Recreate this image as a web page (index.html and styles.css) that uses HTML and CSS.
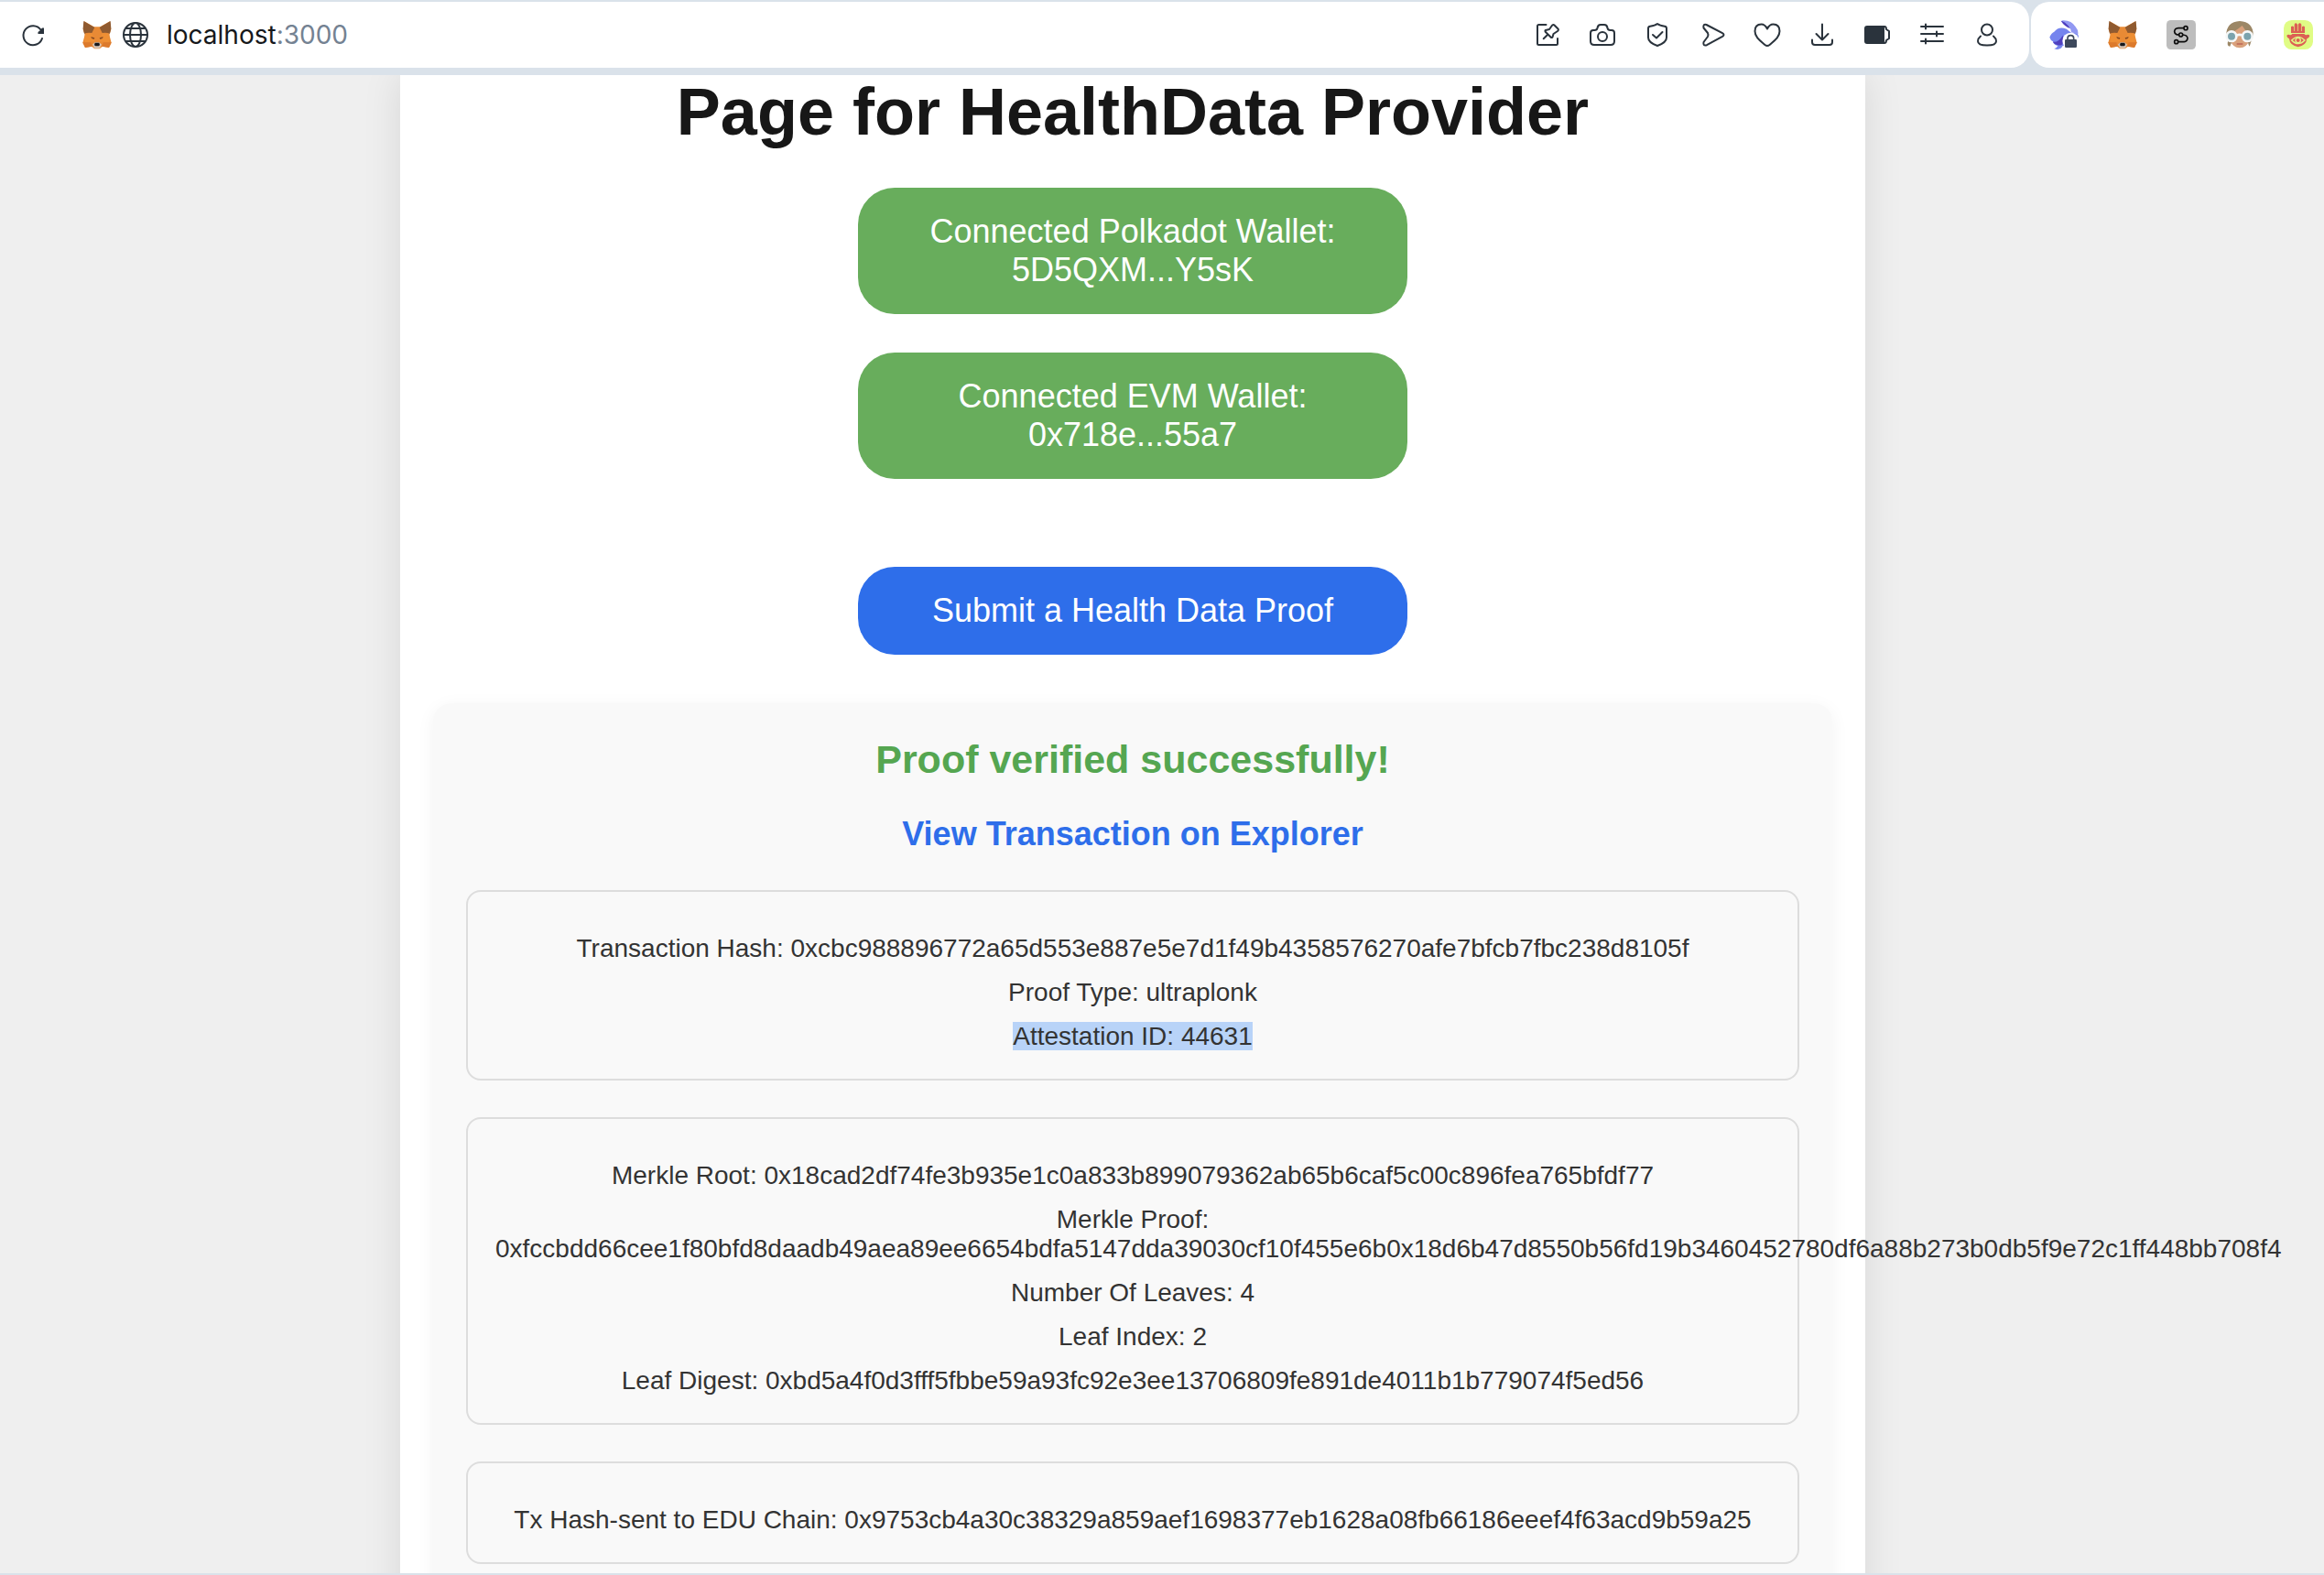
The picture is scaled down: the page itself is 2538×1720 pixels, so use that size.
FILE: index.html
```html
<!DOCTYPE html>
<html lang="en">
<head>
<meta charset="utf-8">
<title>HealthData Provider</title>
<link rel="stylesheet" href="styles.css">
</head>
<body>
<svg class="defs" aria-hidden="true">
  <symbol id="fox" viewBox="0 0 96 96">
    <path fill="#e88a35" d="M6 4L38 22H58L90 4L94 30L88 48L95 74L87 90L66 86L56 94H40L30 86L9 90L1 74L8 48L2 30Z"/>
    <path fill="#8f5a30" d="M4 3L40 24L31 42Q16 40 6 44L2 28ZM92 3L56 24L65 42Q80 40 90 44L94 28Z"/>
    <path fill="#ee8f34" d="M8 46L31 42L42 70L8 72ZM88 46L65 42L54 70L88 72Z"/>
    <path fill="#dc7a2c" d="M1 73H28L32 86L9 90ZM95 73H68L64 86L87 90Z"/>
    <path fill="#8a4d23" d="M28 54L40 58L38 63L30 60ZM68 54L56 58L58 63L66 60Z"/>
    <path fill="#d5c3b5" d="M33 80L41 73H55L63 80L56 92H40Z"/>
    <path fill="#17191c" d="M41 74H55L57 82L53 85H43L39 82Z"/>
  </symbol>
</svg>

<header class="chrome">
  <div class="bar bar-address">
    <button class="icon" aria-label="Reload">
      <svg viewBox="0 0 32 32"><path d="M24.500 10.500A10.500 10.500 0 1 0 26 20"/><path class="solid" d="M28 8.500V15H21.500V13L23.500 11.500L26 8.500Z"/></svg>
    </button>
    <div class="site">
      <svg class="icon" viewBox="0 0 96 96"><use href="#fox"/></svg>
      <svg class="icon globe" viewBox="0 0 32 32"><circle cx="16" cy="16" r="13"/><ellipse cx="16" cy="16" rx="6" ry="13"/><path d="M3 16H29M6 9H26M6 23H26"/></svg>
      <span class="url">localhost<span class="port">:3000</span></span>
    </div>
    <div class="tools">
      <button class="icon" aria-label="Edit"><svg viewBox="0 0 32 32"><path d="M14.500 5H6.500Q5 5 5 6.500V25.500Q5 27 6.500 27H25.500Q27 27 27 25.500V20"/><path d="M23.500 5.500L27.500 9.500Q28.500 10.500 27 12L22.500 15L21.500 18.500Q20.500 19.500 19.500 18.500L13.700 12.700Q13 11.500 14 11L18 10L21 5.700Q22.500 4.500 23.500 5.500ZM16.500 15.500L11.700 20.300"/></svg></button>
      <button class="icon" aria-label="Snapshot"><svg viewBox="0 0 32 32"><path d="M6 11H7.500Q10 11 10.500 8.500Q11 5 14 5H18Q21 5 21.500 8.500Q22 11 24.500 11H26Q29 11 29 14V23Q29 27 25 27H7Q3 27 3 23V14Q3 11 6 11Z"/><circle cx="16" cy="18" r="5"/></svg></button>
      <button class="icon" aria-label="Tracker protection"><svg viewBox="0 0 32 32"><path d="M16 4Q18.500 6 24 6.700Q26 7 26 9V19Q26 24.500 16 28Q6 24.500 6 19V9Q6 7 8 6.700Q13.500 6 16 4Z"/><path d="M11 16L15 19.500L21.500 13"/></svg></button>
      <button class="icon" aria-label="Send"><svg viewBox="0 0 32 32"><path d="M9.500 5L27 14.200Q30 16 27 17.800L10 27.200Q5.500 28.500 6.500 24L11 18Q12 16 11 14L6.500 8.500Q5.500 4 9.500 5Z"/></svg></button>
      <button class="icon" aria-label="Bookmark"><svg viewBox="0 0 32 32"><path d="M16 9.500Q13.500 4.500 9.500 4.500Q2.500 4.500 2.500 12C2.500 19 9 23 13.500 27Q16 29 18.500 27C23 23 29.500 19 29.500 12Q29.500 4.500 22.500 4.500Q18.500 4.500 16 9.500Z"/></svg></button>
      <button class="icon" aria-label="Downloads"><svg viewBox="0 0 32 32"><path d="M16 4.500V21M9.500 15L16 21.500L22.500 15M5 21.500V24Q5 27 8 27H24Q27 27 27 24V21.500"/></svg></button>
      <button class="icon" aria-label="Battery saver"><svg viewBox="0 0 32 32"><rect class="solid" x="2" y="6" width="22" height="20" rx="3"/><path d="M22 7H24Q26 7 26 10L29 12V20L26 22Q26 25 24 25H22"/></svg></button>
      <button class="icon" aria-label="Easy setup"><svg viewBox="0 0 32 32"><path d="M4 7H28M4 15H28M4 23H28M9 4.500V9.500M21 12.500V17.500M9 20.500V25.500"/></svg></button>
      <button class="icon" aria-label="Profile"><svg viewBox="0 0 32 32"><circle cx="16" cy="10.500" r="6"/><path d="M9 17.500Q6 20 6 23C6 26 9 27.500 16 27.500S26 26 26 23Q26 20 23 17.500"/></svg></button>
    </div>
  </div>
  <div class="bar bar-extensions">
    <button class="icon" aria-label="Wallet, locked"><svg class="art" viewBox="0 0 96 96">
      <path fill="#7584ee" d="M1 56Q6 42 16 38Q28 22 48 26Q58 28 62 34L76 44Q94 38 96 54Q94 72 62 78L44 84Q40 94 26 96L16 94Q24 92 28 84Q12 80 12 70Q4 66 1 56Z"/>
      <path fill="#4e3fc0" d="M38 2Q64 4 72 28Q50 22 38 2Z"/>
      <path fill="#9198f2" d="M40 1Q72 -2 86 22Q96 34 94 46L72 40Q70 18 40 1Z"/>
      <path fill="#5040be" d="M12 71Q30 74 44 50Q50 72 40 82Q20 84 12 71Z"/>
      <circle cx="70" cy="68" r="27" fill="#fff"/>
      <path fill="none" stroke="#3d495c" stroke-width="5" d="M60 66V60Q60 50 70 50T80 60V66"/>
      <rect x="51" y="63" width="39" height="27" rx="4" fill="#3d495c"/></svg></button>
    <button class="icon" aria-label="Fox wallet"><svg class="art" viewBox="0 0 96 96"><use href="#fox"/></svg></button>
    <button class="icon" aria-label="S wallet"><svg class="art" viewBox="0 0 96 96">
      <rect width="96" height="96" rx="14" fill="#bdbdbd"/>
      <g fill="none" stroke="#0c0c0c" stroke-width="5"><path d="M57 26H39Q27 27 26 37Q27 48 41 48M53 48Q68 49 69 59Q68 70 58 71H38"/><circle cx="63" cy="26" r="6"/><circle cx="47" cy="48" r="6"/><circle cx="32" cy="71" r="6"/></g></svg></button>
    <button class="icon" aria-label="Avatar"><svg class="art" viewBox="0 0 96 96">
      <path fill="#9c8766" d="M4 48Q4 6 48 3Q92 6 92 48L80 86Q76 82 76 76H20L16 86Q4 86 10 66Z"/>
      <path fill="#d9a17c" d="M18 42Q34 36 56 18Q64 34 78 42V66Q72 90 48 91Q24 90 18 66Z"/>
      <path fill="none" stroke="#b95e50" stroke-width="4" d="M38 78H58"/>
      <g fill="#7ba3ad" stroke="#f5f7f7" stroke-width="8"><circle cx="21" cy="53" r="16"/><circle cx="73" cy="53" r="16"/><path fill="none" d="M37 50Q47 45 57 50"/></g></svg></button>
    <button class="icon" aria-label="Hand wallet"><svg class="art" viewBox="0 0 96 96">
      <rect width="96" height="96" rx="26" fill="#e0fc85"/>
      <path fill="#dc6054" d="M24 42V22Q28 17 33 22V36H35V14Q39 6 45 14V36H47V14Q53 6 58 14V36H60V22Q65 17 69 22V42ZM10 52Q10 46 19 48Q24 50 28 45H67Q72 50 76 48Q85 46 85 52Q84 58 76 61Q74 83 47 88Q20 83 18 61Q11 58 10 52Z"/>
      <path fill="none" stroke="#e0fc85" stroke-width="4" d="M26 66Q47 44 69 66Q47 88 26 66Z"/><circle cx="47" cy="66" r="8" fill="none" stroke="#e0fc85" stroke-width="4"/></svg></button>
  </div>
</header>

<div class="page">
  <main class="card">
    <h1>Page for HealthData Provider</h1>
    <div class="wallets">
      <button class="btn btn-green">Connected Polkadot Wallet: 5D5QXM...Y5sK</button>
      <button class="btn btn-green">Connected EVM Wallet: 0x718e...55a7</button>
    </div>
    <button class="btn btn-blue">Submit a Health Data Proof</button>
    <section class="results">
      <h2>Proof verified successfully!</h2>
      <a class="explorer" href="#">View Transaction on Explorer</a>
      <div class="box">
        <p>Transaction Hash: 0xcbc988896772a65d553e887e5e7d1f49b4358576270afe7bfcb7fbc238d8105f</p>
        <p>Proof Type: ultraplonk</p>
        <p><mark>Attestation ID: 44631</mark></p>
      </div>
      <div class="box">
        <p>Merkle Root: 0x18cad2df74fe3b935e1c0a833b899079362ab65b6caf5c00c896fea765bfdf77</p>
        <p>Merkle Proof: 0xfccbdd66cee1f80bfd8daadb49aea89ee6654bdfa5147dda39030cf10f455e6b0x18d6b47d8550b56fd19b3460452780df6a88b273b0db5f9e72c1ff448bb708f4</p>
        <p>Number Of Leaves: 4</p>
        <p>Leaf Index: 2</p>
        <p>Leaf Digest: 0xbd5a4f0d3fff5fbbe59a93fc92e3ee13706809fe891de4011b1b779074f5ed56</p>
      </div>
      <div class="box">
        <p>Tx Hash-sent to EDU Chain: 0x9753cb4a30c38329a859aef1698377eb1628a08fb66186eeef4f63acd9b59a25</p>
      </div>
    </section>
  </main>
</div>
</body>
</html>
```
FILE: styles.css
```css
* { box-sizing: border-box; }

body {
  margin: 0;
  height: 100vh;
  display: flex;
  flex-direction: column;
  padding: 2px 0;
  overflow: hidden;
  background: #dae2ea;
  font-family: "Liberation Sans", Arial, sans-serif;
}

button {
  border: 0;
  padding: 0;
  background: none;
  font: inherit;
  cursor: pointer;
}

.defs { position: absolute; width: 0; height: 0; }

/* Browser toolbar */
.chrome {
  flex: none;
  display: flex;
  gap: 2px;
  padding-bottom: 8px;
}

.bar {
  display: flex;
  align-items: center;
  height: 72px;
  background: #fff;
}

.bar-address {
  flex: 1;
  padding: 0 30px 0 20px;
  border-radius: 0 20px 20px 0;
}

.bar-extensions {
  flex: none;
  gap: 32px;
  padding: 0 12px 0 20px;
  border-radius: 20px 0 0 20px;
}

.icon {
  flex: none;
  display: block;
  width: 32px;
  height: 32px;
}

.icon svg { display: block; width: 32px; height: 32px; }

button.icon svg:not(.art), .globe {
  fill: none;
  stroke: #2a333c;
  stroke-width: 2;
  stroke-linecap: round;
  stroke-linejoin: round;
}

.icon .solid { fill: #2a333c; stroke: none; }

.site {
  flex: 1;
  display: flex;
  align-items: center;
  gap: 10px;
  margin-left: 38px;
}

.url {
  margin-left: 8px;
  font-family: Inter, sans-serif;
  font-size: 28px;
  line-height: 36px;
  color: #16181b;
}

.port { color: #748292; }

.tools { display: flex; gap: 28px; }

/* Page */
.page {
  flex: 1;
  min-height: 0;
  overflow: hidden;
  padding-right: 64px;
  background: #efefef;
}

.card {
  display: flex;
  flex-direction: column;
  align-items: center;
  max-width: 1600px;
  margin: 0 auto;
  padding: 0 36px 36px;
  background: #fff;
  box-shadow: 0 0 40px rgba(0, 0, 0, 0.1);
  text-align: center;
}

h1 {
  margin: 0 0 42px;
  font-size: 72px;
  line-height: 81px;
  color: #171717;
}

.wallets {
  display: flex;
  flex-direction: column;
  gap: 42px;
  margin-bottom: 96px;
}

.btn {
  width: 600px;
  padding: 27px 60px;
  border-radius: 40px;
  color: #fff;
  font-size: 36px;
  line-height: 42px;
}

.btn-green { background: #68ad5c; }
.btn-blue { background: #2e6eea; }

.results {
  width: 100%;
  margin-top: 53px;
  padding: 36px;
  border-radius: 20px;
  background: #f9f9f9;
  box-shadow: 0 4px 20px rgba(0, 0, 0, 0.05);
  color: #333;
}

h2 {
  margin: 0 0 36px;
  font-size: 43px;
  line-height: 50px;
  color: #55a651;
}

.explorer {
  display: block;
  margin-bottom: 40px;
  color: #2e6eea;
  font-size: 36px;
  font-weight: bold;
  line-height: 42px;
  text-decoration: none;
}

.box {
  padding: 30px;
  border: 2px solid #ddd;
  border-radius: 16px;
  font-size: 28px;
  line-height: 32px;
}

.box + .box { margin-top: 40px; }

.box p { margin: 16px 0 0; }

mark { background: #b8d3f8; color: inherit; }
```
